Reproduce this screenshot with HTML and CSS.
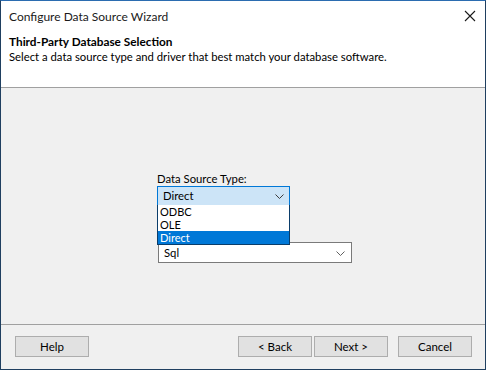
FILE: index.html
```html
<!DOCTYPE html>
<html lang="en">
<head>
  <meta charset="UTF-8">
  <title>Configure Data Source Wizard</title>
  <link rel="stylesheet" href="styles.css">
</head>
<body>
  <div class="window">
    <div class="titlebar">
      <span class="title">Configure Data Source Wizard</span>
      <svg class="close" width="12" height="12" viewBox="0 0 12 12">
        <path d="M1 1 L11 11 M11 1 L1 11" stroke="#1a1a1a" stroke-width="1.1" fill="none"/>
      </svg>
    </div>

    <div class="header">
      <h1>Third-Party Database Selection</h1>
      <p>Select a data source type and driver that best match your database software.</p>
    </div>

    <div class="content">
      <div class="fields">
        <label class="field-label">Data Source Type:</label>
        <div class="combo open">
          <span>Direct</span>
          <svg class="arrow" width="9" height="5" viewBox="0 0 9 5"><path d="M0.5 0.5 L4.5 4.5 L8.5 0.5" stroke="#3c3c3c" fill="none"/></svg>
        </div>
        <ul class="dropdown">
          <li>ODBC</li>
          <li>OLE</li>
          <li class="selected">Direct</li>
        </ul>

        <div class="combo wide">
          <span>Sql</span>
          <svg class="arrow" width="9" height="5" viewBox="0 0 9 5"><path d="M0.5 0.5 L4.5 4.5 L8.5 0.5" stroke="#606060" fill="none"/></svg>
        </div>
      </div>
    </div>

    <div class="footer">
      <button class="btn">Help</button>
      <div class="spacer"></div>
      <button class="btn">&lt; Back</button>
      <button class="btn next">Next &gt;</button>
      <button class="btn cancel">Cancel</button>
    </div>
  </div>
</body>
</html>
```

FILE: styles.css
```css
body {
  margin: 0;
  font-family: Lato, "Liberation Sans", sans-serif;
  font-size: 11.3px;
  color: #000;
}

.window {
  width: 486px;
  height: 370px;
  box-sizing: border-box;
  border: 1px solid #1f3f60;
  border-top-color: #2b6cb0;
  display: flex;
  flex-direction: column;
  background: #fff;
}

.titlebar {
  height: 30px;
  display: flex;
  align-items: center;
  justify-content: space-between;
  padding: 0 9px 0 8px;
}

.title {
  font-size: 12px;
  color: #1a1a1a;
}

.header {
  height: 57px;
  padding: 3px 8px 0 8px;
  box-sizing: border-box;
  border-bottom: 1px solid #a0a0a0;
}

.header h1 {
  margin: 0;
  font-size: 11.8px;
  font-weight: bold;
  line-height: 16px;
}

.header p {
  margin: 0;
  line-height: 14px;
}

.content {
  flex: 1;
  background: #f0f0f0;
  padding: 83px 0 0 156px;
  box-sizing: border-box;
}

.fields {
  position: relative;
  width: 195px;
}

.field-label {
  display: block;
  line-height: 15px;
}

.combo {
  width: 133px;
  height: 20px;
  box-sizing: border-box;
  border: 1px solid #7a7a7a;
  background: #fff;
  display: flex;
  align-items: center;
  justify-content: space-between;
  padding: 0 5px 0 5px;
  line-height: 12px;
}

.combo.open {
  background: #cce4f7;
  border-color: #0078d7;
}

.combo.wide {
  width: 194px;
  height: 21px;
  margin: 36px 0 0 1px;
  padding: 1px 6px 0 5px;
}

.dropdown {
  position: absolute;
  top: 34px;
  left: 0;
  width: 133px;
  margin: 0;
  padding: 0;
  list-style: none;
  box-sizing: border-box;
  border: 1px solid #0a3d6a;
  border-top: none;
  background: #fff;
  z-index: 2;
}

.dropdown li {
  font-size: 11px;
  line-height: 13px;
  height: 13px;
  padding: 0 2px;
}

.dropdown li.selected {
  background: #0078d7;
  color: #fff;
}

.footer {
  height: 45px;
  border-top: 1px solid #a0a0a0;
  background: #f0f0f0;
  display: flex;
  align-items: flex-start;
  padding: 11px 13px 0 14px;
  box-sizing: border-box;
}

.spacer {
  flex: 1;
}

.btn {
  width: 74px;
  height: 21px;
  margin: 0;
  padding: 0;
  border: 1px solid #adadad;
  background: #e1e1e1;
  font-family: Lato, "Liberation Sans", sans-serif;
  font-size: 11.5px;
  color: #000;
}

.next {
  margin-left: 2px;
}

.cancel {
  margin-left: 10px;
}
```
